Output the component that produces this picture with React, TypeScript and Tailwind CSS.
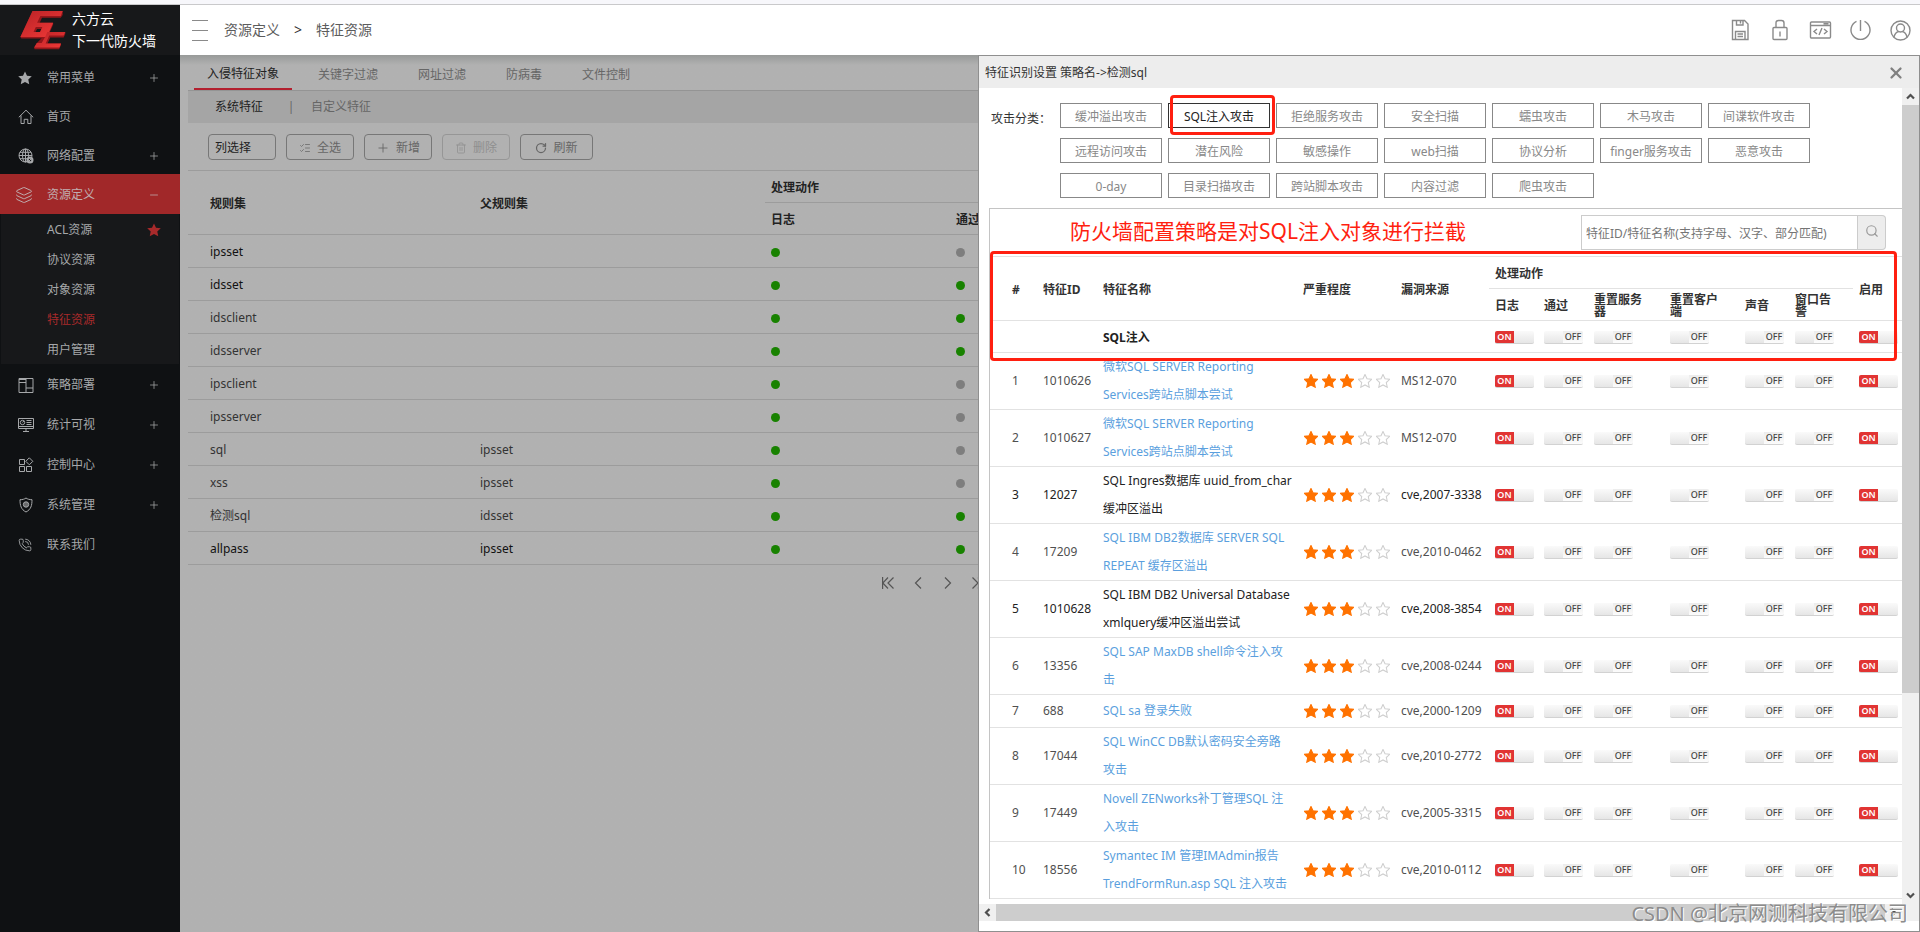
import { useState } from "react";
import type { ReactNode } from "react";
import { Layers, ListChecks, PhoneCall, Plus, Minus, RotateCw, Search, Trash2, X } from "lucide-react";

type MenuItem = {
  label: string;
  icon: ReactNode;
  expandable?: boolean;
};

const line = {
  fill: "none",
  stroke: "currentColor",
  strokeWidth: 1,
  "aria-hidden": true,
};

const StarShape = ({ className }: { className: string }) => (
  <svg viewBox="0.4 0.4 13.2 13.2" className={className} aria-hidden="true">
    <path d="M7 .8 8.900 4.900l4.500.500-3.300 3 .900 4.500L7 10.700l-4 2.200.900-4.500-3.300-3 4.500-.500z" />
  </svg>
);

const HomeIcon = () => (
  <svg viewBox="0 0 16 16" className="h-4 w-4" {...line}>
    <path d="M.8 8.3 8 1.2l7.2 7.1M3 6.5v8h3.2v-4.2h3.6v4.2H13v-8" />
  </svg>
);

const NetworkIcon = () => (
  <svg viewBox="0 0 16 16" className="h-4 w-4" {...line}>
    <circle cx="7.5" cy="7.5" r="6.5" />
    <ellipse cx="7.5" cy="7.5" rx="3" ry="6.5" />
    <path d="M7.5 1v13M1 7.5h13M2 4.3h11M2 10.7h7" />
    <circle cx="12" cy="12" r="2.4" strokeWidth="2.2" />
  </svg>
);

const PolicyIcon = () => (
  <svg viewBox="0 0 16 16" className="h-4 w-4" {...line}>
    <path d="M1 1.5h14v14H1zM8 1.5v14M1 5.5h7M8 11h7M1 2.5h7" />
  </svg>
);

const StatsIcon = () => (
  <svg viewBox="0 0 16 16" className="h-4 w-4" {...line}>
    <path d="M.5 1.5h15v10H.5zM.5 9.5h15M8 11.5v3M5 14.5h6M8.5 3.5h5M8.5 5.5h5M8.5 7.5h5" />
    <circle cx="4.5" cy="5.5" r="2.2" />
    <path d="M4.5 5.5 6 3.8" />
  </svg>
);

const ControlIcon = () => (
  <svg viewBox="0 0 16 16" className="h-4 w-4" {...line}>
    <path d="M1.5 2.5h5v5h-5zM1.5 9.5h5v5h-5zM8.5 9.5h5v5h-5zM11.3.8l3.5 3.5-3.5 3.5-3.5-3.5z" />
  </svg>
);

const ShieldIcon = () => (
  <svg viewBox="0 0 16 16" className="h-4 w-4" {...line}>
    <path d="M8 1c1.6 1.2 3.6 1.7 6 1.7 0 5.700-1 9.800-6 12.300C3 12.500 2 8.400 2 2.700 4.400 2.700 6.400 2.200 8 1z" />
    <circle cx="8" cy="7.500" r="2.700" fill="currentColor" fillOpacity="0.6" />
  </svg>
);

const topMenu: MenuItem[] = [
  { label: "常用菜单", icon: <StarShape className="h-3.5 w-3.5 fill-current" />, expandable: true },
  { label: "首页", icon: <HomeIcon /> },
  { label: "网络配置", icon: <NetworkIcon />, expandable: true },
];

const subMenu = ["ACL资源", "协议资源", "对象资源", "特征资源", "用户管理"];

const bottomMenu: MenuItem[] = [
  { label: "策略部署", icon: <PolicyIcon />, expandable: true },
  { label: "统计可视", icon: <StatsIcon />, expandable: true },
  { label: "控制中心", icon: <ControlIcon />, expandable: true },
  { label: "系统管理", icon: <ShieldIcon />, expandable: true },
  { label: "联系我们", icon: <PhoneCall className="h-3.5 w-3.5" strokeWidth={1.5} /> },
];

const tabs = ["入侵特征对象", "关键字过滤", "网址过滤", "防病毒", "文件控制"];

const ruleSets = [
  { name: "ipsset", parent: "", log: true, pass: false, strong: true },
  { name: "idsset", parent: "", log: true, pass: true, strong: true },
  { name: "idsclient", parent: "", log: true, pass: true },
  { name: "idsserver", parent: "", log: true, pass: true },
  { name: "ipsclient", parent: "", log: true, pass: false },
  { name: "ipsserver", parent: "", log: true, pass: false },
  { name: "sql", parent: "ipsset", log: true, pass: false },
  { name: "xss", parent: "ipsset", log: true, pass: false },
  { name: "检测sql", parent: "idsset", log: true, pass: true },
  { name: "allpass", parent: "ipsset", log: true, pass: true, strong: true },
];

const categories = [
  "缓冲溢出攻击",
  "SQL注入攻击",
  "拒绝服务攻击",
  "安全扫描",
  "蠕虫攻击",
  "木马攻击",
  "间谍软件攻击",
  "远程访问攻击",
  "潜在风险",
  "敏感操作",
  "web扫描",
  "协议分析",
  "finger服务攻击",
  "恶意攻击",
  "0-day",
  "目录扫描攻击",
  "跨站脚本攻击",
  "内容过滤",
  "爬虫攻击",
];

const actions = ["日志", "通过", "重置服务器", "重置客户端", "声音", "窗口告警"];

const signatures = [
  { id: "1010626", name: "微软SQL SERVER Reporting Services跨站点脚本尝试", source: "MS12-070", link: true },
  { id: "1010627", name: "微软SQL SERVER Reporting Services跨站点脚本尝试", source: "MS12-070", link: true },
  { id: "12027", name: "SQL Ingres数据库 uuid_from_char 缓冲区溢出", source: "cve,2007-3338", link: false },
  { id: "17209", name: "SQL IBM DB2数据库 SERVER SQL REPEAT 缓存区溢出", source: "cve,2010-0462", link: true },
  { id: "1010628", name: "SQL IBM DB2 Universal Database xmlquery缓冲区溢出尝试", source: "cve,2008-3854", link: false },
  { id: "13356", name: "SQL SAP MaxDB shell命令注入攻击", source: "cve,2008-0244", link: true },
  { id: "688", name: "SQL sa 登录失败", source: "cve,2000-1209", link: true },
  { id: "17044", name: "SQL WinCC DB默认密码安全旁路攻击", source: "cve,2010-2772", link: true },
  { id: "17449", name: "Novell ZENworks补丁管理SQL 注入攻击", source: "cve,2005-3315", link: true },
  { id: "18556", name: "Symantec IM 管理IMAdmin报告 TrendFormRun.asp SQL 注入攻击", source: "cve,2010-0112", link: true },
];

function Logo() {
  return (
    <svg viewBox="60 30 140 122" className="h-10 w-[46px] shrink-0" aria-hidden="true">
      <defs>
        <linearGradient id="logoFace" x1="0" y1="0" x2="1" y2="1">
          <stop offset="0" stopColor="#b82226" />
          <stop offset="1" stopColor="#f23a38" />
        </linearGradient>
      </defs>
      {/* Extruded side */}
      <g fill="#94161a">
        <path fillRule="evenodd" d="M98 33l92 0 0 12-6 9h-57l-7 15h41v5l-19 43H64l-3-5zM112 88l-5 9h14l4-9z" />
        <path d="M145 97h53v6l-5 11h-41l-8 18h41v5l-6 13h-75l-1-6 9-14z" />
      </g>
      <path
        fill="url(#logoFace)"
        fillRule="evenodd"
        d="M98 33h92l-6 15h-62l-10 21h49l-19 43H61zM108 82l-7 15h20l7-15z"
      />
      <path fill="url(#logoFace)" d="M143 97h55l-5 11h-44l-11 24h47l-5 12h-77l8-13h15l12-22z" />
    </svg>
  );
}

function SideItem({ item }: { item: MenuItem }) {
  return (
    <button type="button" className="flex h-full w-full items-center pt-0.5 pr-5 pl-[17px] text-left">
      <span className="flex w-[30px] items-center pl-px">{item.icon}</span>
      <span className="flex-1">{item.label}</span>
      {item.expandable && <Plus className="h-3 w-3" strokeWidth={1.5} />}
    </button>
  );
}

function Sidebar() {
  return (
    <aside className="w-[180px] shrink-0 bg-[#0f1113] text-xs text-[#a6a8aa]">
      <div className="flex h-[50px] items-center bg-[#17181a] pl-5 text-sm leading-[22px] text-white">
        <Logo />
        <div className="pl-1.5">
          六方云
          <br />
          下一代防火墙
        </div>
      </div>
      <nav className="pt-0.5">
        <ul>
          {topMenu.map((item) => (
            <li key={item.label} className="h-[39px]">
              <SideItem item={item} />
            </li>
          ))}
          <li>
            <button
              type="button"
              className="flex h-10 w-full items-center bg-[#a12829] pt-0.5 pr-5 pl-[15px] text-left text-[#c0aeb0]"
            >
              <span className="w-8">
                <Layers className="h-[18px] w-[18px]" strokeWidth={1.3} />
              </span>
              <span className="flex-1">资源定义</span>
              <Minus className="h-3 w-3" strokeWidth={1.5} />
            </button>
            <ul className="mx-px bg-[#17181a]">
              {subMenu.map((label) => (
                <li key={label}>
                  <a
                    href="#"
                    className={`flex h-[30px] items-center justify-between pt-0.5 pr-[18px] pl-[46px] ${
                      label === "特征资源" ? "text-[#a82a2b]" : ""
                    }`}
                  >
                    {label}
                    {label === "ACL资源" && <StarShape className="h-3.5 w-3.5 fill-[#a82a2b]" />}
                  </a>
                </li>
              ))}
            </ul>
          </li>
          {bottomMenu.map((item) => (
            <li key={item.label} className="h-10">
              <SideItem item={item} />
            </li>
          ))}
        </ul>
      </nav>
    </aside>
  );
}

function Header() {
  return (
    <header className="flex h-[50px] shrink-0 items-center justify-between bg-white pr-2 pl-3 text-sm text-[#5c5c5c]">
      <div className="flex items-center">
        <button type="button" aria-label="菜单" className="flex flex-col gap-[9px]">
          <span className="block h-px w-4 bg-[#8a8a8a]" />
          <span className="block h-px w-4 bg-[#8a8a8a]" />
          <span className="block h-px w-4 bg-[#8a8a8a]" />
        </button>
        <a href="#" className="pl-4">
          资源定义
        </a>
        <span className="px-3.5 text-[#333]">&gt;</span>
        <span>特征资源</span>
      </div>
      <div className="flex items-center gap-4 text-[#8a8a8a]">
        <button type="button" aria-label="保存">
          <svg viewBox="0 0 24 24" className="h-6 w-6" {...line} strokeWidth="1.4">
            <path d="M4.500 2.500h12l3.500 3.500v15.500H4.500zM8.500 2.500v4.500h6.500v-4.500M12.500 3v2.500M7.500 21.500v-8h9.500v8M9.500 16h5.500M9.500 18.500h5.500" />
          </svg>
        </button>
        <button type="button" aria-label="锁定">
          <svg viewBox="0 0 24 24" className="h-6 w-6" {...line} strokeWidth="1.4">
            <rect x="5" y="9.500" width="14" height="12" rx="1" />
            <path d="M8 9.500v-4.500c0-1.500 1-2.500 2.500-2.500h3c1.500 0 2.500 1 2.500 2.500v4.500M12 13.500v5" />
          </svg>
        </button>
        <button type="button" aria-label="命令行">
          <svg viewBox="0 0 24 24" className="h-6 w-6" {...line} strokeWidth="1.4">
            <rect x="2.500" y="4" width="20" height="16" rx="1" />
            <path d="M2.500 7.500h20M15.500 5.800h5M9 11l-3 2.500 3 2.500M16 11l3 2.500-3 2.500M14 10l-3 7" />
          </svg>
        </button>
        <button type="button" aria-label="退出">
          <svg viewBox="0 0 24 24" className="h-6 w-6" {...line} strokeWidth="1.4">
            <path d="M8.500 3.300a9.500 9.500 0 1 0 8 0M12.500 2v11" />
          </svg>
        </button>
        <button type="button" aria-label="用户">
          <svg viewBox="0 0 24 24" className="h-6 w-6" {...line} strokeWidth="1.4">
            <circle cx="12.500" cy="12.500" r="9.500" />
            <circle cx="12.500" cy="10" r="4" />
            <path d="M6 19c.8-3.200 2.500-5 4.700-5.500M19 19c-.8-3.200-2.500-5-4.700-5.500" />
          </svg>
        </button>
      </div>
    </header>
  );
}

const toolButton = "flex h-[26px] items-center justify-center gap-1.5 rounded-sm border border-[#777] pt-0.5 text-[#666]";

function Dot({ on }: { on: boolean }) {
  return <span className={`block h-[9px] w-[9px] rounded-full ${on ? "bg-[#188200]" : "bg-[#7e7e7e]"}`} />;
}

function RuleSetPage() {
  const th = "border-b border-[#9c9c9c] px-1.5 pt-0.5 text-left font-bold";
  const td = "h-[33px] border-b border-[#9c9c9c] px-1.5 pt-0.5";

  return (
    <div className="h-full bg-gradient-to-b from-[#989a99] to-[#b1b1b1] to-[10px] pl-2 text-[#222]">
      <div role="tablist" className="flex h-9 border-b border-[#949494]">
        {tabs.map((tab, i) => (
          <button
            key={tab}
            type="button"
            role="tab"
            aria-selected={i === 0}
            className={
              i === 0
                ? "mx-1.5 border-b-2 border-[#b3202f] px-[13px] pt-1"
                : "px-5 pt-1 text-[#666]"
            }
          >
            {tab}
          </button>
        ))}
      </div>
      <div className="flex h-8 items-center bg-[#a5a5a5] pl-[27px]">
        <a href="#">系统特征</a>
        <span className="mr-4 ml-6 w-2 text-center text-[#666]">|</span>
        <a href="#" className="text-[#666]">
          自定义特征
        </a>
      </div>
      <div className="flex h-[47px] items-center gap-2.5 pl-5">
        <select
          aria-label="列选择"
          className="h-[26px] w-[68px] appearance-none rounded-sm border border-[#777] px-1.5 pt-0.5 text-[#222]"
        >
          <option>列选择</option>
        </select>
        <button type="button" className={`${toolButton} w-[68px]`}>
          <ListChecks className="h-3 w-3" strokeWidth={1.5} />
          全选
        </button>
        <button type="button" className={`${toolButton} w-[68px]`}>
          <Plus className="h-3.5 w-3.5" strokeWidth={1.5} />
          新增
        </button>
        <button type="button" disabled className={`${toolButton} w-[68px] opacity-45`}>
          <Trash2 className="h-3 w-3" strokeWidth={1.5} />
          删除
        </button>
        <button type="button" className={`${toolButton} w-[73px]`}>
          <RotateCw className="h-3 w-3" strokeWidth={2.5} />
          刷新
        </button>
      </div>
      <table className="w-full table-fixed border-separate border-spacing-0 border-t border-[#9c9c9c] text-[#333]">
        <colgroup>
          <col className="w-[286px]" />
          <col className="w-[291px]" />
          <col className="w-[185px]" />
          <col />
        </colgroup>
        <thead className="text-[#222]">
          <tr>
            <th rowSpan={2} className={`${th} pl-[22px]`}>
              规则集
            </th>
            <th rowSpan={2} className={th}>
              父规则集
            </th>
            <th colSpan={2} className={`${th} h-8`}>
              处理动作
            </th>
          </tr>
          <tr>
            <th className={`${th} h-8`}>日志</th>
            <th className={th}>通过</th>
          </tr>
        </thead>
        <tbody>
          {ruleSets.map((rule) => (
            <tr key={rule.name} className={rule.strong ? "text-[#111]" : ""}>
              <td className={`${td} pl-[22px]`}>{rule.name}</td>
              <td className={td}>{rule.parent}</td>
              <td className={td}>
                <Dot on={rule.log} />
              </td>
              <td className={td}>
                <Dot on={rule.pass} />
              </td>
            </tr>
          ))}
        </tbody>
      </table>
      {/* Pager */}
      <div className="flex h-9 items-center justify-center gap-[18px] pr-[242px] text-[#555]">
        <button type="button" aria-label="首页">
          <svg viewBox="0 0 12 12" className="h-3 w-3" {...line} strokeWidth="1.2">
            <path d="M.6 0v12M6 .5.800 6 6 11.500M11.500.5 6 6l5.500 5.500" />
          </svg>
        </button>
        <button type="button" aria-label="上一页">
          <svg viewBox="0 0 12 12" className="h-3 w-3" {...line} strokeWidth="1.2">
            <path d="M9 .5 3.500 6 9 11.500" />
          </svg>
        </button>
        <button type="button" aria-label="下一页">
          <svg viewBox="0 0 12 12" className="h-3 w-3" {...line} strokeWidth="1.2">
            <path d="M3 .5 8.500 6 3 11.500" />
          </svg>
        </button>
        <button type="button" aria-label="末页">
          <svg viewBox="0 0 12 12" className="h-3 w-3" {...line} strokeWidth="1.2">
            <path d="M.5.5 6 6 .5 11.500M6 .5 11.200 6 6 11.500M11.400 0v12" />
          </svg>
        </button>
      </div>
    </div>
  );
}

function Switch({ label, on = false }: { label: string; on?: boolean }) {
  return (
    <label className="relative flex h-[13px] w-[39px] overflow-hidden rounded-xs border-b border-[#d2d2d2] bg-gradient-to-b from-[#fafafa] to-[#e6e6e6] text-[9px] leading-3">
      <input type="checkbox" defaultChecked={on} aria-label={label} className="peer sr-only" />
      <span className="hidden h-[13px] w-[19px] bg-[#e13433] text-center font-semibold text-white peer-checked:block">
        ON
      </span>
      <span className="ml-[19px] h-[13px] w-5 bg-gradient-to-b from-[#ececec] to-[#fdfdfd] text-center font-medium text-[#444] peer-checked:hidden">
        OFF
      </span>
    </label>
  );
}

function Stars({ value }: { value: number }) {
  return (
    <div className="flex gap-1 pl-px" role="img" aria-label={`${value}/5`}>
      {[1, 2, 3, 4, 5].map((n) => (
        <StarShape
          key={n}
          className={
            n <= value
              ? "h-3.5 w-3.5 fill-[#ff7200] stroke-[#ff7200]"
              : "h-3.5 w-3.5 fill-white stroke-[#cfcfcf]"
          }
        />
      ))}
    </div>
  );
}

function SignatureTable() {
  const th = "border-b border-[#e2e2e2] pt-0.5 pl-1.5 text-left font-bold leading-3";
  const td = "h-[33px] border-b border-[#e2e2e2] pl-1.5 leading-7";

  return (
    <table className="w-full table-fixed border-separate border-spacing-0 border-t border-[#e2e2e2] text-[#505050]">
      <colgroup>
        <col className="w-[47px]" />
        <col className="w-[60px]" />
        <col />
        <col className="w-[98px]" />
        <col className="w-[94px]" />
        <col className="w-[49px]" />
        <col className="w-[50px]" />
        <col className="w-[76px]" />
        <col className="w-[75px]" />
        <col className="w-[50px]" />
        <col className="w-[64px]" />
        <col className="w-[49px]" />
      </colgroup>
      <thead className="text-[#333]">
        <tr>
          <th rowSpan={2} className={`${th} pl-[22px]`}>
            #
          </th>
          <th rowSpan={2} className={th}>
            特征ID
          </th>
          <th rowSpan={2} className={th}>
            特征名称
          </th>
          <th rowSpan={2} className={th}>
            严重程度
          </th>
          <th rowSpan={2} className={th}>
            漏洞来源
          </th>
          <th colSpan={6} className={`${th} h-8`}>
            处理动作
          </th>
          <th rowSpan={2} className={th}>
            启用
          </th>
        </tr>
        <tr>
          {actions.map((action) => (
            <th key={action} className={`${th} h-8 pr-4`}>
              {action}
            </th>
          ))}
        </tr>
      </thead>
      <tbody>
        <tr>
          <td className="h-8 border-b border-[#e2e2e2]" colSpan={2} />
          <td className="border-b border-[#e2e2e2] pt-0.5 pl-1.5 font-bold text-[#222]" colSpan={3}>
            SQL注入
          </td>
          {actions.map((action) => (
            <td key={action} className="border-b border-[#e2e2e2] pt-0.5 pl-1.5">
              <Switch label={`SQL注入 ${action}`} on={action === "日志"} />
            </td>
          ))}
          <td className="border-b border-[#e2e2e2] pt-0.5 pl-1.5">
            <Switch label="SQL注入 启用" on />
          </td>
        </tr>
        {signatures.map((sig, i) => (
          <tr key={sig.id} className={sig.link ? "" : "text-[#222]"}>
            <td className={`${td} pl-[22px]`}>{i + 1}</td>
            <td className={td}>{sig.id}</td>
            <td className={`${td} pr-[5px]`}>
              {sig.link ? (
                <a href="#" className="text-[#5b9fde]">
                  {sig.name}
                </a>
              ) : (
                sig.name
              )}
            </td>
            <td className={td}>
              <Stars value={3} />
            </td>
            <td className={`${td} whitespace-nowrap`}>{sig.source}</td>
            {actions.map((action) => (
              <td key={action} className={td}>
                <Switch label={`${sig.id} ${action}`} on={action === "日志"} />
              </td>
            ))}
            <td className={td}>
              <Switch label={`${sig.id} 启用`} on />
            </td>
          </tr>
        ))}
      </tbody>
    </table>
  );
}

const Arrow = ({ d }: { d: string }) => (
  <svg viewBox="0 0 17 17" className="h-[17px] w-[17px]" fill="none" stroke="#505050" strokeWidth="2.2" aria-hidden="true">
    <path d={d} />
  </svg>
);

function SignatureDialog() {
  const [category, setCategory] = useState("SQL注入攻击");

  return (
    <section
      role="dialog"
      aria-label="特征识别设置"
      className="absolute inset-y-0 right-0 flex w-[942px] flex-col border border-[#8f8f8f] bg-white text-[#333]"
    >
      <div className="flex h-8 shrink-0 items-center justify-between bg-[#ededed] pt-0.5 pr-3.5 pl-1.5">
        <h2>特征识别设置 策略名-&gt;检测sql</h2>
        <button type="button" aria-label="关闭">
          <X className="h-[18px] w-[18px] text-[#808080]" strokeWidth={3} />
        </button>
      </div>

      <div className="flex min-h-0 flex-1">
        <div className="min-w-0 flex-1 overflow-hidden">
          <div className="flex pt-[15px] pl-3">
            <span className="w-[69px] shrink-0 pt-2">攻击分类：</span>
            <div className="flex flex-wrap gap-x-1.5 gap-y-2.5">
              {categories.map((name) => (
                <div key={name} className="relative">
                  <button
                    type="button"
                    onClick={() => setCategory(name)}
                    className={`h-[25px] w-[102px] border pt-0.5 ${
                      name === category ? "border-[#333] text-[#222]" : "border-[#888] text-[#888]"
                    }`}
                  >
                    {name}
                  </button>
                  {name === "SQL注入攻击" && (
                    <span className="pointer-events-none absolute -top-2 -right-[5px] -bottom-[7px] left-0.5 rounded-sm border-3 border-[#ff1f10]" />
                  )}
                </div>
              ))}
            </div>
          </div>

          <div className="relative mt-2.5 ml-2.5 border-t border-l border-[#c4c4c4]">
            <div className="flex h-[47px] items-center justify-between pr-4 pl-20">
              <p className="pb-1 text-[21px] text-[#ff1f10]">防火墙配置策略是对SQL注入对象进行拦截</p>
              <div className="flex h-[35px]">
                <input
                  type="text"
                  aria-label="搜索特征"
                  placeholder="特征ID/特征名称(支持字母、汉字、部分匹配)"
                  className="w-[277px] border border-[#ccc] px-1 pt-0.5 outline-none placeholder:text-[#757575]"
                />
                <button
                  type="button"
                  aria-label="搜索"
                  className="flex w-7 items-center justify-center rounded-r-sm border border-l-0 border-[#ccc] bg-[#ededed] pb-1 text-[#999]"
                >
                  <Search className="h-3.5 w-3.5" strokeWidth={2} />
                </button>
              </div>
            </div>
            <SignatureTable />
            <span className="pointer-events-none absolute top-[42px] right-[5px] left-0 h-[110px] rounded-sm border-3 border-[#ff1f10]" />
          </div>
        </div>
        {/* Vertical scrollbar */}
        <div className="flex w-[17px] shrink-0 flex-col justify-between bg-[#f0f0f0]">
          <Arrow d="M5 10.500 8.500 7l3.500 3.500" />
          <div className="mb-auto h-[72%] bg-[#cdcdcd]" />
          <Arrow d="M5 6.500 8.500 10l3.500-3.500" />
        </div>
      </div>
      {/* Horizontal scrollbar */}
      <div className="mb-2.5 flex h-[17px] shrink-0 bg-[#f0f0f0] pr-[17px]">
        <Arrow d="M10.500 5 7 8.500l3.500 3.500" />
        <div className="flex-1 bg-[#cdcdcd]" />
        <Arrow d="M6.500 5 10 8.500 6.500 12" />
      </div>
    </section>
  );
}

export default function App() {
  return (
    <div className="flex h-screen flex-col overflow-hidden bg-white font-['Noto_Sans','Noto_Sans_CJK_SC',sans-serif] text-xs">
      <div className="h-[5px] shrink-0 border-b border-[#c9c9cb] bg-[#f7f7fb]" />
      <div className="flex min-h-0 flex-1">
        <Sidebar />
        <main className="flex min-w-0 flex-1 flex-col">
          <Header />
          <div className="relative min-h-0 flex-1">
            <RuleSetPage />
            <SignatureDialog />
            <span className="pointer-events-none absolute right-3 bottom-1 text-xl text-[#8c8c8c] [text-shadow:1px_1px_0_#fff]">
              CSDN @北京网测科技有限公司
            </span>
          </div>
        </main>
      </div>
    </div>
  );
}
